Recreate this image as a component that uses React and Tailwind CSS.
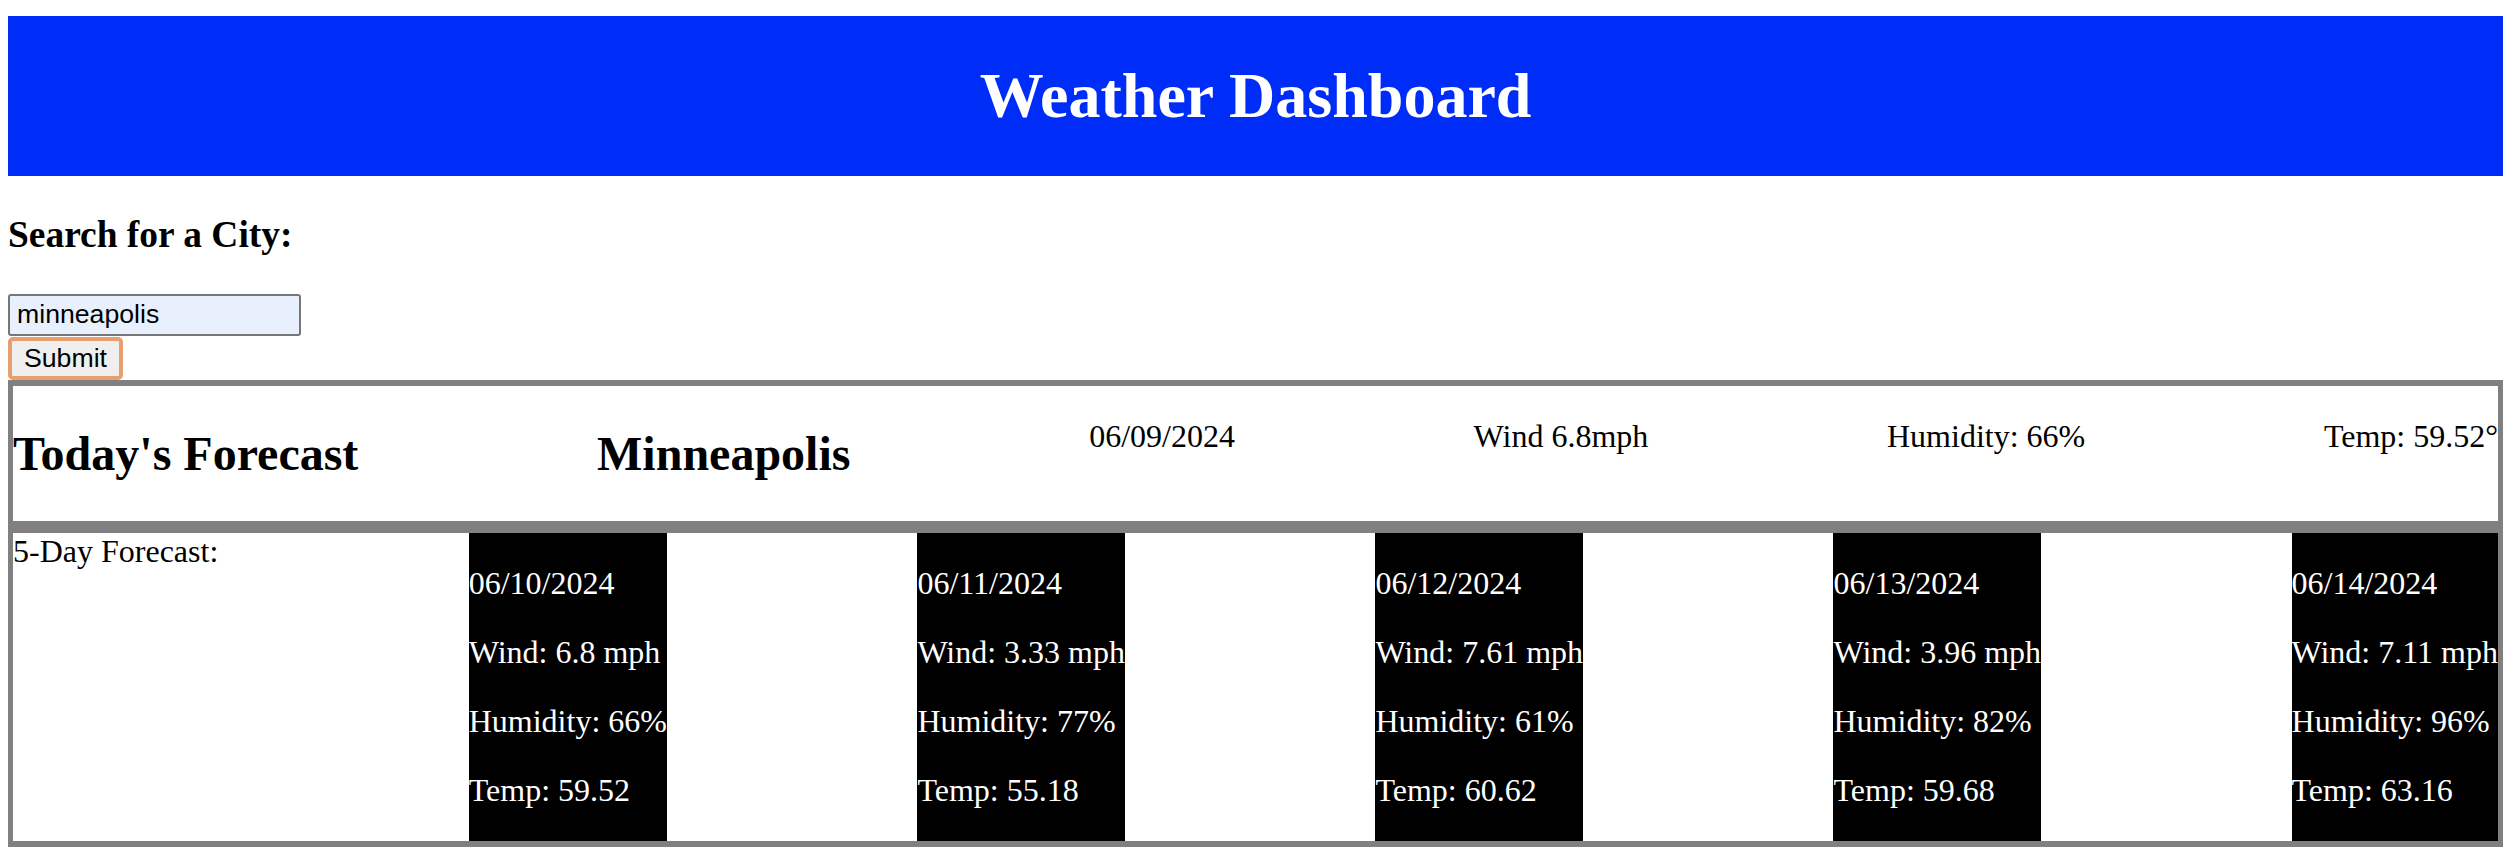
import React from "react";

const days = [
  { date: "06/10/2024", wind: "6.8", hum: "66", temp: "59.52" },
  { date: "06/11/2024", wind: "3.33", hum: "77", temp: "55.18" },
  { date: "06/12/2024", wind: "7.61", hum: "61", temp: "60.62" },
  { date: "06/13/2024", wind: "3.96", hum: "82", temp: "59.68" },
  { date: "06/14/2024", wind: "7.11", hum: "96", temp: "63.16" },
];

export default function App() {
  return (
    <div className="min-h-screen bg-white pt-4 pl-2 pr-[13px] font-['Liberation_Serif',serif] text-[32px] leading-[normal] text-black">
      <header className="flex h-[160px] items-center justify-center bg-[#002cf7]">
        <h1 className="text-[64px] font-bold leading-[normal] text-white">Weather Dashboard</h1>
      </header>
      <h3 className="my-[37.44px] text-[37.44px] font-bold leading-[normal]">Search for a City:</h3>
      <form className="flex flex-col items-start" onSubmit={(e) => e.preventDefault()}>
        <input
          type="text"
          defaultValue="minneapolis"
          className="box-border h-[42px] w-[293px] rounded-[3px] border-2 border-[#767676] bg-[#e8f0fe] px-[7px] font-['Liberation_Sans',Arial,sans-serif] text-[26.67px] leading-none text-black outline-none"
        />
        <button
          type="submit"
          className="mt-px box-border flex h-[43px] w-[115px] items-center justify-center rounded-[5px] border-[4px] border-[#e89f6f] bg-[#efefef] font-['Liberation_Sans',Arial,sans-serif] text-[26.67px] leading-none text-black"
        >
          Submit
        </button>
      </form>
      <section className="flex items-start justify-between border-x-[5px] border-y-[6px] border-[#808080]">
        <h2 className="my-[39.84px] text-[48px] font-bold leading-[normal]">Today's Forecast</h2>
        <h2 className="my-[39.84px] text-[48px] font-bold leading-[normal]">Minneapolis</h2>
        <p className="my-[32px]">06/09/2024</p>
        <p className="my-[32px]">Wind 6.8mph</p>
        <p className="my-[32px]">Humidity: 66%</p>
        <p className="my-[32px]">Temp: 59.52°</p>
      </section>
      <section className="flex justify-between border-x-[5px] border-y-[6px] border-[#808080]">
        <div>5-Day Forecast:</div>
        {days.map((d) => (
          <div key={d.date} className="flex flex-col gap-[32px] bg-black py-[32px] text-white">
            <p>{d.date}</p>
            <p>Wind: {d.wind} mph</p>
            <p>Humidity: {d.hum}%</p>
            <p>Temp: {d.temp}</p>
          </div>
        ))}
      </section>
    </div>
  );
}
